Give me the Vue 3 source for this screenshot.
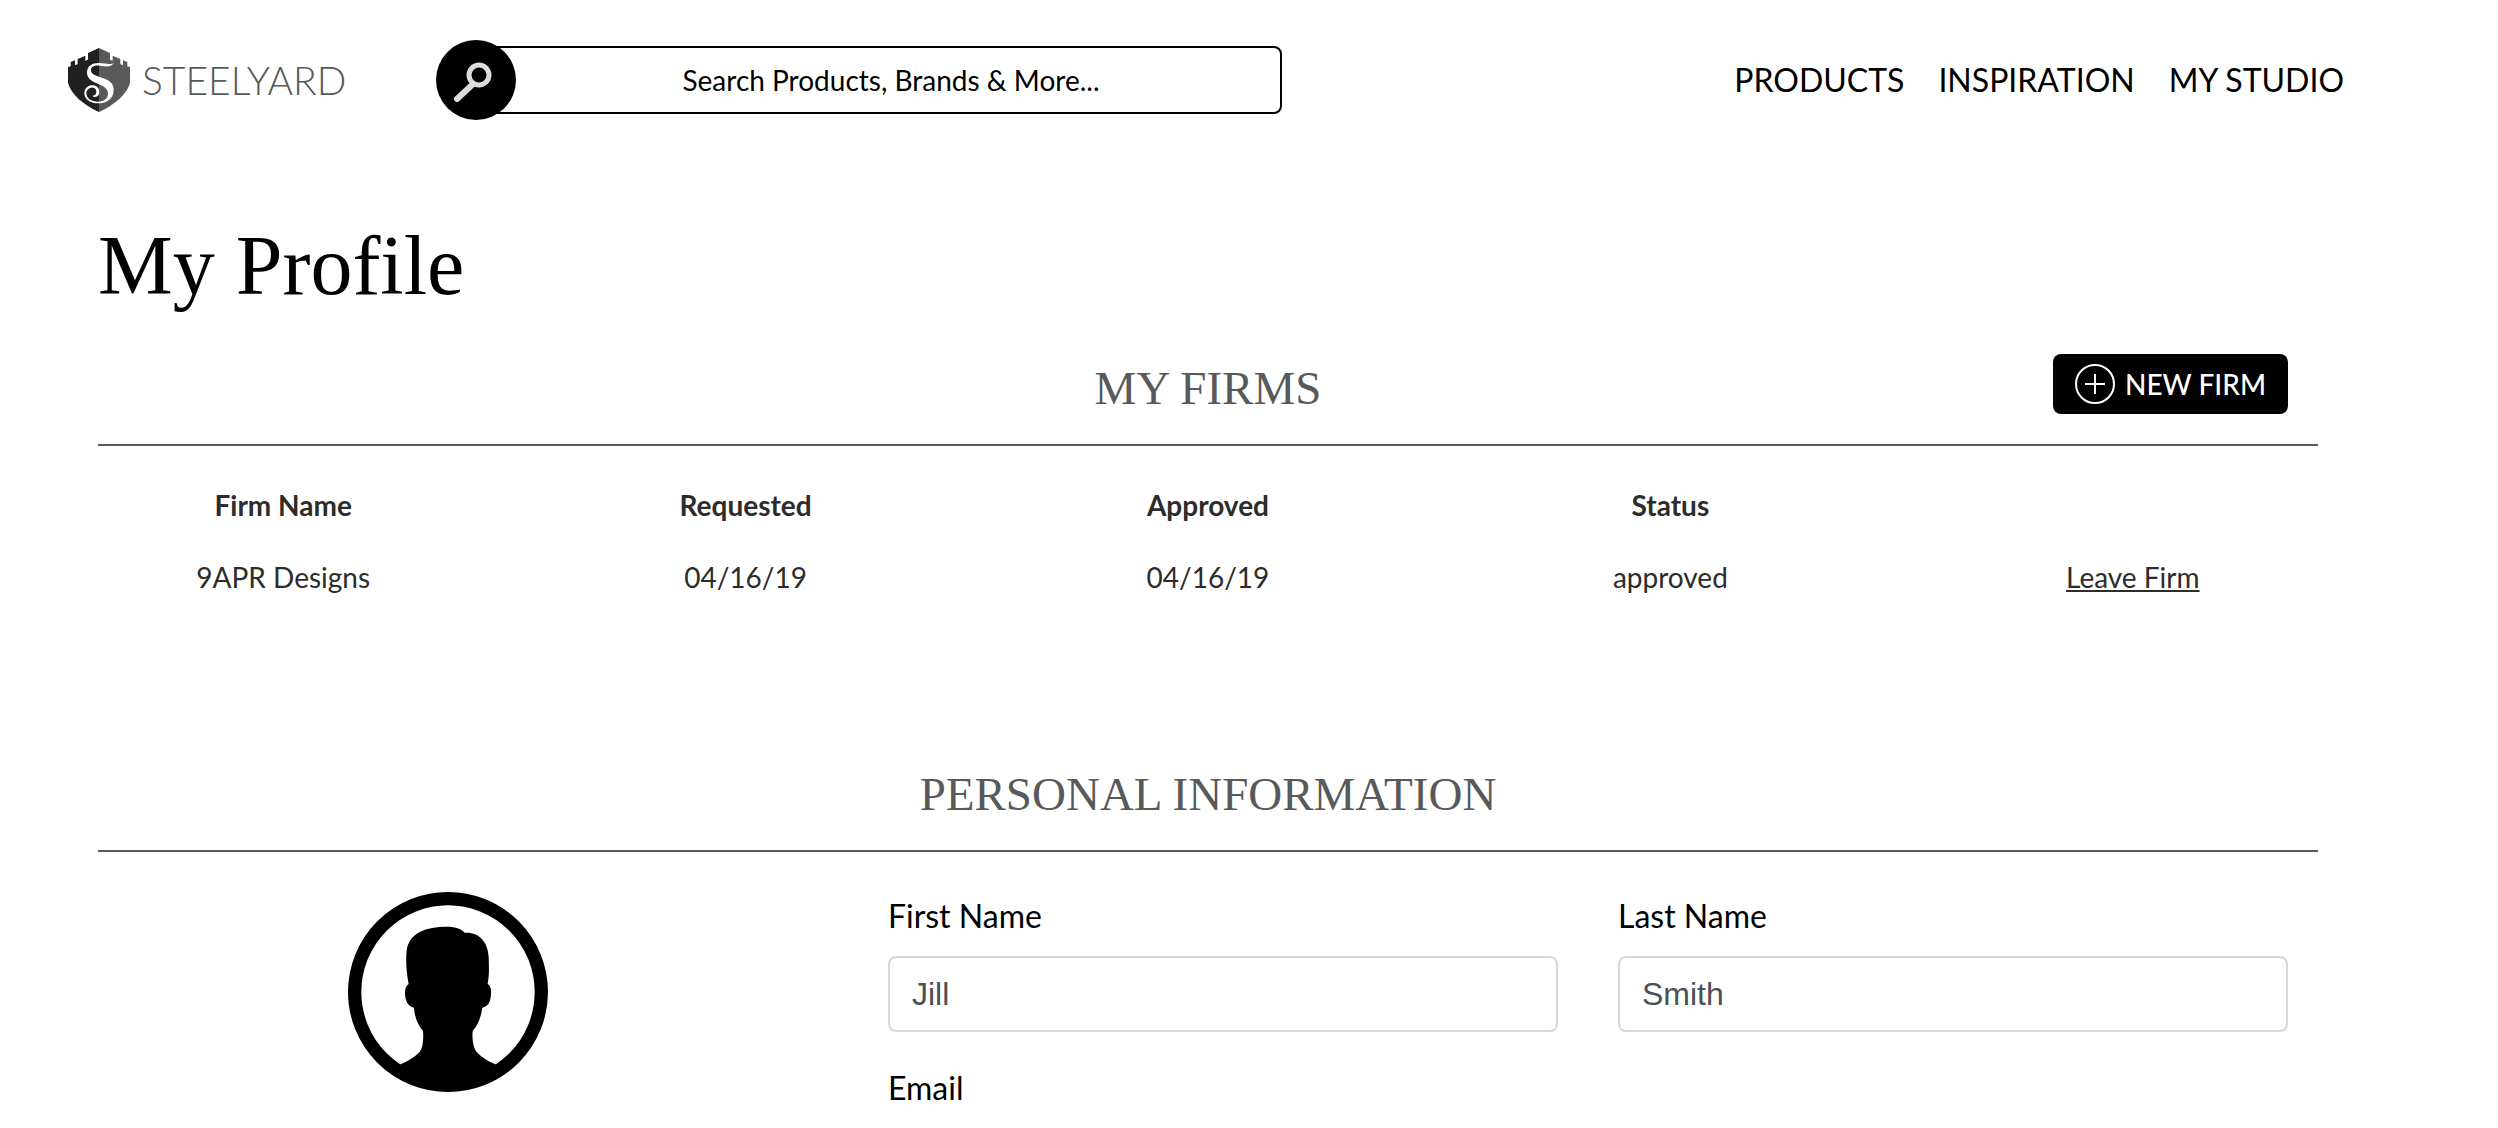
<template>
  <div class="page">
    <header class="header">
      <a class="logo" href="#">
        <svg class="logo-mark" viewBox="54 60 186 192" aria-hidden="true">
          <path fill="#221f20" d="M147 60 114 75V95L106 98V83L83 93V108L75 112V97L62 102V115L54 117V164C62 198 100 230 147 252Z" />
          <path fill="#58595b" d="M147 60 180 75V95L188 98V83L211 93V108L219 112V97L232 102V115L240 117V164C232 198 194 230 147 252Z" />
          <path fill="#fff" d="M191 105C182 120 166 115 150 113C132 111 122 117 123 128C124 139 140 144 158 150C180 157 192 168 191 188C190 212 170 226 145 226C118 226 102 211 103 194C104 178 118 170 131 172C144 174 151 186 147 198C144 207 132 210 127 203C134 204 140 199 139 190C138 181 131 177 123 179C112 182 107 191 110 201C114 215 128 221 145 221C162 221 173 212 174 198C175 181 160 174 143 167C124 160 110 150 111 132C112 113 128 104 148 105C163 106 180 111 191 105Z" />
        </svg>
        <span class="logo-text">STEELYARD</span>
      </a>

      <form class="search" @submit.prevent>
        <button class="search-button" type="submit" aria-label="Search">
          <svg viewBox="0 0 80 80" fill="none" stroke="#dcdcdc" stroke-linecap="round" aria-hidden="true">
            <circle cx="43" cy="35" r="10" stroke-width="5" />
            <path d="M37 44 21 59" stroke-width="6" />
          </svg>
        </button>
        <input v-model="query" class="search-input" type="text" aria-label="Search" placeholder="Search Products, Brands &amp; More..." />
      </form>

      <nav class="nav">
        <a v-for="item in navItems" :key="item" href="#">{{ item }}</a>
      </nav>
    </header>

    <main class="content">
      <h1>My Profile</h1>

      <section class="firms">
        <div class="section-head">
          <h2>MY FIRMS</h2>
          <button class="new-firm" type="button">
            <svg viewBox="0 0 40 40" fill="none" stroke="#fff" stroke-width="2" aria-hidden="true">
              <circle cx="20" cy="20" r="19" />
              <path d="M10 20h20M20 10v20" />
            </svg>
            <span>NEW FIRM</span>
          </button>
        </div>
        <table class="firm-table">
          <thead>
            <tr>
              <th>Firm Name</th>
              <th>Requested</th>
              <th>Approved</th>
              <th>Status</th>
              <th></th>
            </tr>
          </thead>
          <tbody>
            <tr v-for="firm in firms" :key="firm.name">
              <td>{{ firm.name }}</td>
              <td>{{ firm.requested }}</td>
              <td>{{ firm.approved }}</td>
              <td>{{ firm.status }}</td>
              <td><a href="#">Leave Firm</a></td>
            </tr>
          </tbody>
        </table>
      </section>

      <section>
        <div class="section-head">
          <h2>PERSONAL INFORMATION</h2>
        </div>
        <div class="personal">
          <svg class="avatar" viewBox="0 0 600 600" role="img" aria-label="Profile picture">
            <circle cx="300" cy="300" r="280" fill="#fff" stroke="#000" stroke-width="40" />
            <path d="M157 517C178 508 200 496 215 480C225 467 227 440 225 417C208 396 199 372 198 347C180 342 171 328 171 302C171 289 175 280 182 276C175 242 173 205 176 175C184 122 233 104 298 104C324 104 341 111 350 122C396 120 420 152 422 195C423 225 424 250 419 276C427 280 430 290 429 305C428 330 420 343 403 347C399 375 390 400 374 417C372 440 375 466 386 480C400 496 420 508 443 517L430 550Q300 620 170 550Z" />
          </svg>
          <form class="fields" @submit.prevent>
            <div class="field">
              <label for="first-name">First Name</label>
              <input id="first-name" v-model="profile.firstName" type="text" />
            </div>
            <div class="field">
              <label for="last-name">Last Name</label>
              <input id="last-name" v-model="profile.lastName" type="text" />
            </div>
            <div class="field wide">
              <label for="email">Email</label>
              <input id="email" v-model="profile.email" type="email" />
            </div>
          </form>
        </div>
      </section>
    </main>
  </div>
</template>

<script setup>
import { ref, reactive } from 'vue'

const query = ref('')

const navItems = ['PRODUCTS', 'INSPIRATION', 'MY STUDIO']

const firms = ref([
  { name: '9APR Designs', requested: '04/16/19', approved: '04/16/19', status: 'approved' }
])

const profile = reactive({
  firstName: 'Jill',
  lastName: 'Smith',
  email: ''
})
</script>

<style>
body {
  background: #fff;
}
</style>

<style scoped>
.page {
  font-family: Lato, "Liberation Sans", sans-serif;
  color: #000;
}

.page * {
  box-sizing: border-box;
}

a {
  color: inherit;
  text-decoration: none;
}

/* header */
.header {
  display: flex;
  align-items: center;
  padding: 40px 154px 40px 68px;
}

.logo {
  display: flex;
  align-items: center;
  gap: 12px;
  width: 368px;
  color: #58595b;
}

.logo-mark {
  width: 62px;
  height: 64px;
}

.logo-text {
  font-size: 39px;
  font-weight: 300;
  line-height: 44px;
}

.search {
  display: flex;
  align-items: center;
  width: 846px;
}

.search-button {
  position: relative;
  z-index: 1;
  flex: none;
  width: 80px;
  height: 80px;
  padding: 0;
  border: 0;
  border-radius: 50%;
  background: #000;
}

.search-button svg {
  display: block;
}

.search-input {
  flex: 1;
  min-width: 0;
  height: 68px;
  margin-left: -40px;
  padding: 0 0 0 24px;
  border: 2px solid #000;
  border-radius: 8px;
  background: #fff;
  font: 28px/34px Lato, sans-serif;
  text-align: center;
}

.search-input::placeholder {
  color: #000;
  opacity: 1;
}

.nav {
  display: flex;
  gap: 34px;
  margin-left: auto;
  font-size: 32px;
  line-height: 38px;
}

/* profile */
.content {
  padding: 58px 180px 0 98px;
}

h1,
h2 {
  margin: 0;
  font-family: "Liberation Serif", serif;
  font-weight: 400;
}

h1 {
  font-size: 84px;
  line-height: 96px;
}

.firms {
  margin: 40px 0 147px;
}

.section-head {
  display: grid;
  grid-template-columns: 1fr auto 1fr;
  align-items: end;
  min-height: 92px;
  padding: 0 30px 30px;
  border-bottom: 2px solid #58595f;
}

.section-head h2 {
  grid-column: 2;
  color: #58595b;
  font-size: 47px;
  line-height: 52px;
}

.new-firm {
  display: flex;
  align-items: center;
  justify-self: end;
  gap: 10px;
  height: 60px;
  padding: 0 22px;
  border: 0;
  border-radius: 8px;
  background: #000;
  color: #fff;
  font: 500 28px/34px Lato, sans-serif;
}

.new-firm svg {
  width: 40px;
  height: 40px;
}

.firm-table {
  width: calc(100% + 92px);
  margin: 23px -46px 0;
  border-collapse: collapse;
  table-layout: fixed;
  color: #2d2c2a;
  font-size: 28px;
  line-height: 34px;
  text-align: center;
}

.firm-table th,
.firm-table td {
  padding: 19px 0;
}

.firm-table a {
  text-decoration: underline;
}

.personal {
  display: grid;
  grid-template-columns: 1fr 2fr;
  column-gap: 90px;
  margin-top: 40px;
  padding-right: 30px;
}

.avatar {
  justify-self: center;
  width: 200px;
  height: 200px;
}

.fields {
  display: grid;
  grid-template-columns: 1fr 1fr;
  gap: 32px 60px;
}

.field {
  display: flex;
  flex-direction: column;
  gap: 16px;
  min-width: 0;
}

.field.wide {
  grid-column: span 2;
}

.field label {
  font-size: 32px;
  line-height: 48px;
}

.field input {
  width: 100%;
  height: 76px;
  padding: 0 22px;
  border: 2px solid #d8d8d8;
  border-radius: 8px;
  background: #fff;
  color: #495057;
  font: 32px/38px "Liberation Sans", sans-serif;
}
</style>
